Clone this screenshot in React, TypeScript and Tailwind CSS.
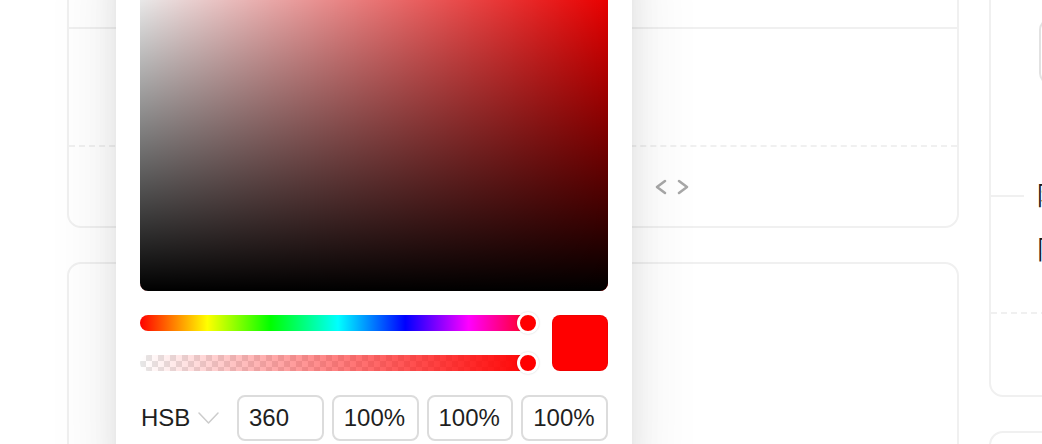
import React from 'react'

const HUE_STOPS =
  'bg-[linear-gradient(90deg,#ff0000_0%,#ffff00_17%,#00ff00_33%,#00ffff_50%,#0000ff_67%,#ff00ff_83%,#ff0000_100%)]'

function Chevrons() {
  return (
    <svg width="36" height="16" viewBox="0 0 36 16" fill="none" stroke="#a8a8a8" strokeWidth={2.6} strokeLinecap="round" strokeLinejoin="round">
      <polyline points="11,2 3,8 11,14" />
      <polyline points="25,2 33,8 25,14" />
    </svg>
  )
}

function Handle() {
  return (
    <span className="absolute right-[-3px] top-1/2 -translate-y-1/2 w-[22px] h-[22px] rounded-full border-[3px] border-white bg-[#ff0000] shadow-[0_0_2px_rgba(0,0,0,0.18)]" />
  )
}

function ColorPopover() {
  return (
    <div className="absolute left-[116px] top-[-53px] w-[516px] p-6 rounded-2xl bg-white shadow-[0_12px_32px_0_rgba(0,0,0,0.08),0_6px_12px_-8px_rgba(0,0,0,0.12),0_18px_60px_18px_rgba(0,0,0,0.06)]">
      {/* saturation / brightness panel */}
      <div className="h-[320px] rounded-lg overflow-hidden bg-[#ff0000]">
        <div className="w-full h-full bg-linear-to-r from-white to-transparent">
          <div className="w-full h-full bg-linear-to-t from-black to-transparent" />
        </div>
      </div>

      {/* sliders + swatch */}
      <div className="flex gap-4 mt-6">
        <div className="flex-1 flex flex-col justify-between h-[56px]">
          <div className={`relative h-4 rounded-full ${HUE_STOPS}`}>
            <Handle />
          </div>
          <div className="relative h-4 rounded-full bg-[conic-gradient(#e6e6e6_25%,#ffffff_0_50%,#e6e6e6_0_75%,#ffffff_0)] bg-[length:12px_12px]">
            <div className="absolute inset-0 rounded-full bg-linear-to-r from-[rgba(255,0,0,0)] to-[#ff0000]" />
            <Handle />
          </div>
        </div>
        <div className="w-[56px] h-[56px] rounded-lg bg-[#ff0000] shadow-[inset_0_0_0_1px_rgba(0,0,0,0.06)]" />
      </div>

      {/* format + inputs */}
      <div className="flex items-center gap-2 mt-6 text-[24px] text-[#1f1f1f]">
        <div className="w-[89px] flex items-center gap-2 pl-px">
          <span>HSB</span>
          <svg width="21" height="12" viewBox="0 0 21 12" fill="none" stroke="#cccccc" strokeWidth={1.5} strokeLinecap="round" strokeLinejoin="round">
            <polyline points="1,1 10.5,11 20,1" />
          </svg>
        </div>
        {['360', '100%', '100%', '100%'].map((v, i) => (
          <div key={i} className="flex-1 h-[46px] flex items-center pl-[10px] rounded-lg border-2 border-[#dcdcdc]">
            {v}
          </div>
        ))}
      </div>
    </div>
  )
}

export default function App() {
  return (
    <div className="relative w-[1042px] h-[444px] overflow-hidden bg-white font-['Liberation_Sans','Noto_Sans_CJK_SC',sans-serif]">
      <div className="flex gap-[30px] pl-[67px] -mt-[60px]">
        {/* main column */}
        <div className="w-[892px] flex-shrink-0 flex flex-col gap-[34px]">
          <div className="rounded-[14px] border-2 border-[#f0f0f0]">
            <div className="h-[87px] border-b-2 border-[#f0f0f0]" />
            <div className="h-[118px] border-b-2 border-dashed border-[#f0f0f0]" />
            <div className="h-[79px] flex items-center pl-[585px]">
              <Chevrons />
            </div>
          </div>
          <div className="h-[300px] rounded-[14px] border-2 border-[#f0f0f0]" />
        </div>

        {/* side column */}
        <div className="w-[300px] flex-shrink-0 flex flex-col gap-[34px]">
          <div className="rounded-[14px] border-2 border-[#f0f0f0]">
            <div className="pt-[76px] pl-[48px] pb-[42px] border-b-2 border-dashed border-[#f0f0f0]">
              <div className="h-[67px] rounded-xl border-2 border-[#e2e2e2]" />
              <div className="mt-[91px] -ml-[48px] h-10 flex items-center gap-[13px] text-[26px] text-[#1a1a1a]">
                <span className="w-[33px] h-[2px] bg-[#f0f0f0]" />
                <span>随机配色</span>
              </div>
              <div className="mt-[14px] -ml-[2px] h-10 flex items-center text-[26px] text-[#1a1a1a]">
                <span>限定配色</span>
              </div>
            </div>
            <div className="h-[81px]" />
          </div>
          <div className="h-[200px] rounded-[14px] border-2 border-[#f0f0f0]" />
        </div>
      </div>

      <ColorPopover />
    </div>
  )
}
